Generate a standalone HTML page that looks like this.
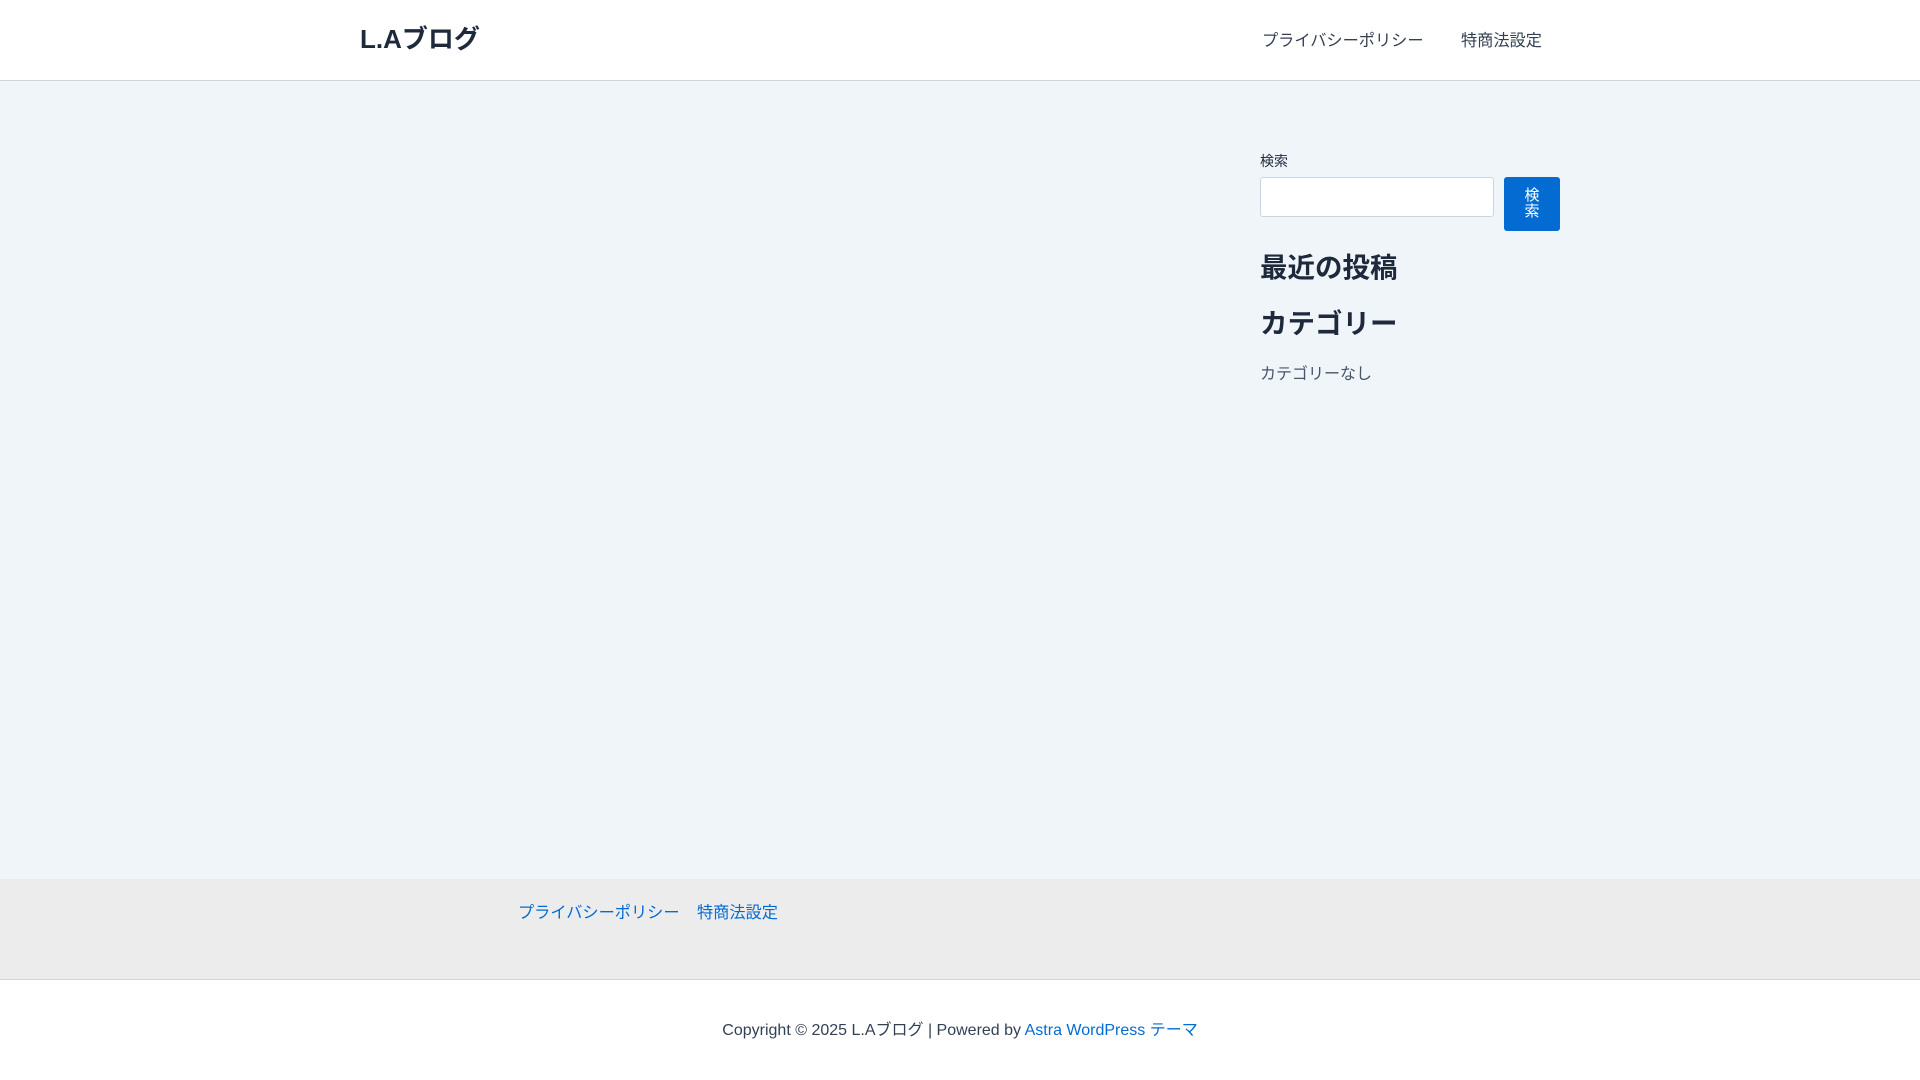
<!DOCTYPE html>
<html><head><meta charset="utf-8"><style>
*{margin:0;padding:0;box-sizing:border-box}
body{width:1920px;height:1080px;overflow:hidden;font-family:"Liberation Sans","Noto Sans CJK JP",sans-serif;background:#fff;color:#1e293b;position:relative}
.hdr{position:absolute;left:0;top:0;width:1920px;height:81px;background:#fff;border-bottom:1px solid #d1d5db}
.logo{position:absolute;left:360px;top:21px;font-size:26px;font-weight:bold;color:#1e293b;line-height:36px}
.nav{position:absolute;top:30px;font-size:16.2px;line-height:22px;color:#334155}
.main{position:absolute;left:0;top:81px;width:1920px;height:798px;background:#f0f5fa}
.lbl{position:absolute;left:1260px;top:151px;font-size:14px;line-height:20px;color:#1e293b}
.inp{position:absolute;left:1260px;top:177px;width:234px;height:40px;background:#fff;border:1px solid #cbd5e1;border-radius:3px}
.btn{position:absolute;left:1504px;top:177px;width:56px;height:54px;background:#046bd2;border-radius:3px;color:#fff;font-size:15px;line-height:16px;text-align:center;padding-top:11px}
.h{position:absolute;left:1260px;font-size:27.5px;font-weight:bold;line-height:36px;color:#1e293b}
.t{position:absolute;left:1260px;top:364px;font-size:16px;line-height:22px;color:#475569}
.fb{position:absolute;left:0;top:879px;width:1920px;height:101px;background:#ececec;border-bottom:1px solid #d4d4d4}
.fl{position:absolute;top:902px;font-size:16.2px;line-height:22px;color:#046bd2}
.cp{position:absolute;left:0;top:1020px;width:1920px;text-align:center;font-size:16px;line-height:22px;color:#334155}
.cp a{color:#046bd2;text-decoration:none}
</style></head><body>
<div class="hdr">
<div class="logo">L.Aブログ</div>
<div class="nav" style="left:1262px">プライバシーポリシー</div>
<div class="nav" style="left:1461px">特商法設定</div>
</div>
<div class="main"></div>
<div class="lbl">検索</div>
<div class="inp"></div>
<div class="btn">検<br>索</div>
<div class="h" style="top:250px">最近の投稿</div>
<div class="h" style="top:306px">カテゴリー</div>
<div class="t">カテゴリーなし</div>
<div class="fb"></div>
<div class="fl" style="left:518px">プライバシーポリシー</div>
<div class="fl" style="left:697px">特商法設定</div>
<div class="cp">Copyright © 2025 L.Aブログ | Powered by <a>Astra WordPress テーマ</a></div>
</body></html>
